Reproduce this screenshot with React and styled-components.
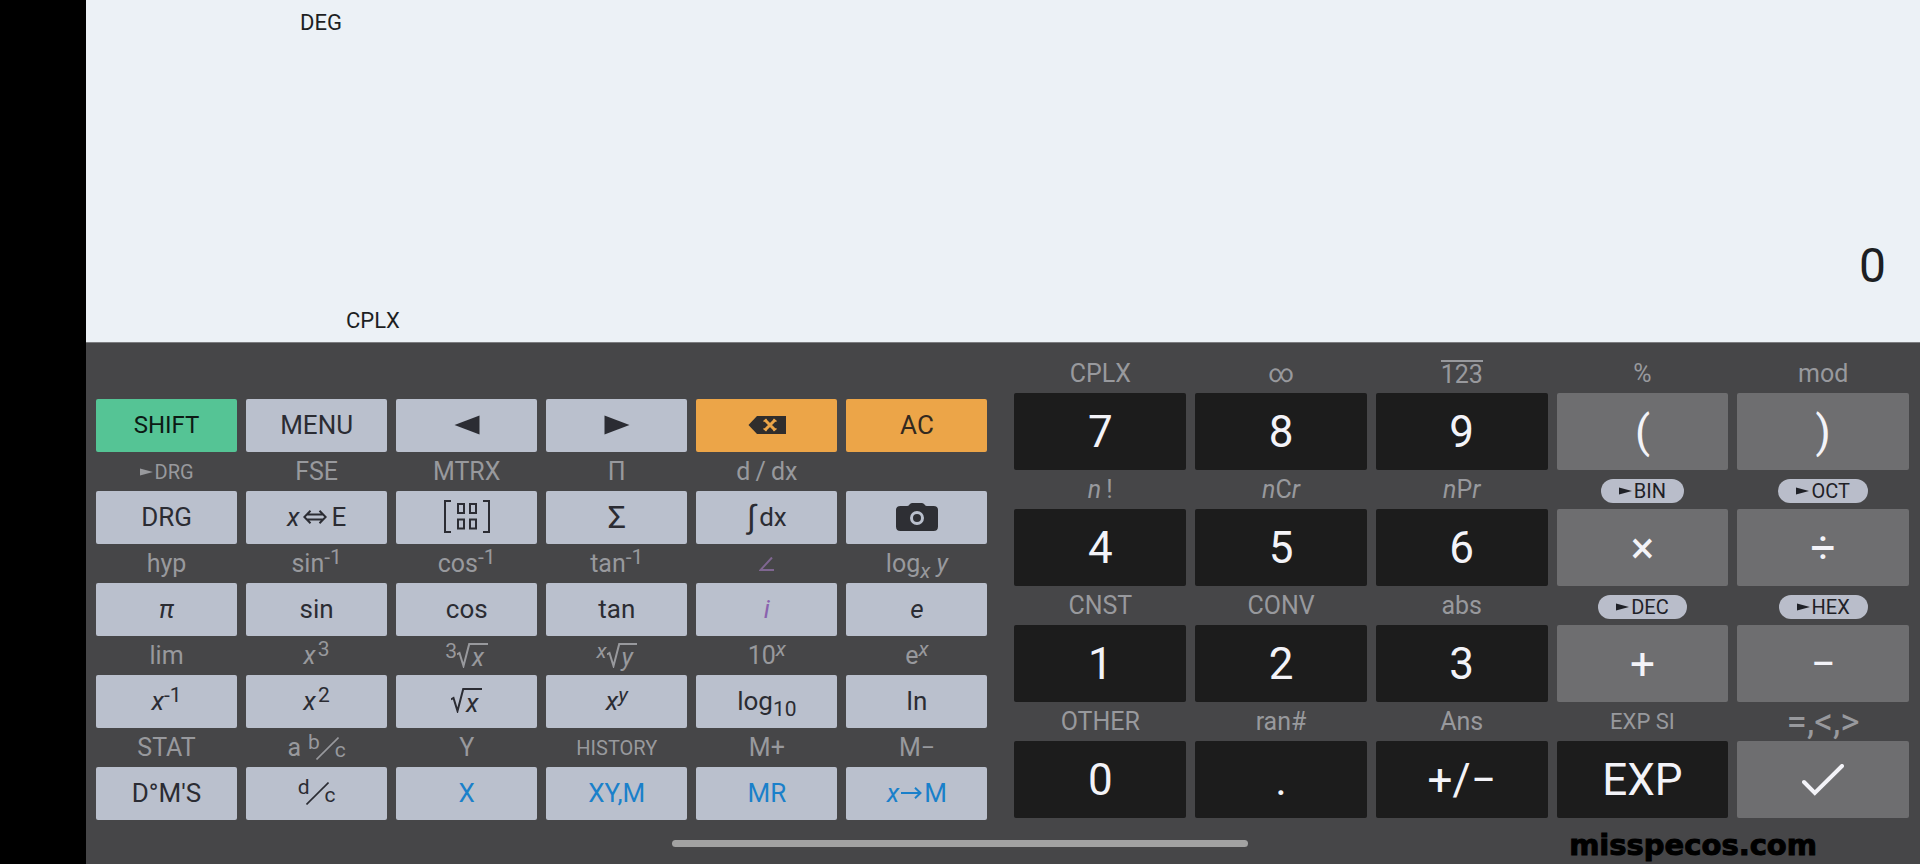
import React from 'react';
import styled, { createGlobalStyle } from 'styled-components';

const GlobalStyle = createGlobalStyle`
  :root {
    --display: #ecf1f6;
    --panel: #464648;
    --ink: #2b2c33;
    --label: #98999d;
    --blue: #1a80ca;
    --purple: #8a62ae;
    --violet: #7f6691;
  }

  *,
  *::before,
  *::after {
    box-sizing: border-box;
  }

  body {
    margin: 0;
    background: #000;
    font-family: Roboto, "Liberation Sans", sans-serif;
  }
`;

const PageStyles = styled.div`
  position: relative;
  display: flex;
  flex-direction: column;
  min-height: 100vh;
  padding-left: 86px;
`;

const DisplayStyles = styled.section`
  flex: 1;
  display: flex;
  flex-direction: column;
  padding: 10px 34px 8px 214px;
  background: var(--display);
  color: #1d1f23;
  font-size: 22px;
  line-height: 26px;

  output {
    margin: auto 0 14px;
    font-size: 48px;
    line-height: 56px;
    text-align: right;
  }

  .mode {
    padding-left: 46px;
  }
`;

const KeyboardStyles = styled.main`
  display: grid;
  grid-template-columns: 297fr 298fr;
  gap: 27px;
  align-items: start;
  padding: 11px 11px 44px 10px;
  border-top: 1px solid #7b7c7f;
  background: var(--panel);
`;

const KeyGrid = styled.div`
  display: grid;
  grid-template-columns: repeat(${({ $columns }) => $columns}, 1fr);
  column-gap: 9px;
  padding-top: ${({ $offset }) => $offset || 0}px;
`;

const KeyStyles = styled.div`
  display: flex;
  flex-direction: column;
  min-width: 0;
`;

const Label = styled.span`
  display: flex;
  align-items: center;
  justify-content: center;
  height: 39px;
  color: ${({ $color }) => $color || 'var(--label)'};
  font-size: ${({ $size }) => $size || 25}px;
  white-space: pre;
`;

const tones = {
  light: { background: '#bac0cd', color: 'var(--ink)' },
  memory: { background: '#bac0cd', color: 'var(--blue)' },
  complex: { background: '#bac0cd', color: 'var(--purple)' },
  shift: { background: '#55c495', color: '#0c1a14' },
  orange: { background: '#eca548', color: '#33291f' },
  dark: { background: '#1c1c1c', color: '#f3f3f8' },
  grey: { background: '#6e6e70', color: '#f3f3f8' },
};

const Button = styled.button`
  display: flex;
  align-items: center;
  justify-content: center;
  height: ${({ $large }) => ($large ? 77 : 53)}px;
  padding: ${({ $large }) => ($large ? 0 : '0 0 2px')};
  border: 0;
  border-radius: 2px;
  background: ${({ $tone }) => tones[$tone].background};
  color: ${({ $tone }) => tones[$tone].color};
  font-family: inherit;
  font-size: ${({ $large, $size }) => $size || ($large ? 44 : 26)}px;
  white-space: pre;
  cursor: pointer;
`;

const Pill = styled.span`
  display: flex;
  align-items: center;
  gap: 2px;
  height: 24px;
  margin-top: 3px;
  padding: 0 18px;
  border-radius: 12px;
  background: #b9bdca;
  color: #1f2127;
  font-size: 20px;
`;

const Sup = styled.span`
  font-size: 21px;
  line-height: 0;
  vertical-align: 8px;
`;

const Sub = styled.span`
  font-size: 21px;
  line-height: 0;
  vertical-align: -6px;
`;

const Inline = styled.span`
  display: flex;
  align-items: center;
  gap: ${({ $gap }) => $gap || 0}px;
`;

const Integral = styled.span`
  font-size: 32px;
  line-height: 36px;
`;

const RootStyles = styled.span`
  display: flex;
  align-items: flex-start;

  .index {
    font-size: 21px;
    line-height: 17px;
  }

  .radicand {
    height: 25px;
    padding: 0 4px 0 2px;
    border-top: 2px solid currentColor;
    line-height: 26px;
  }
`;

const FractionStyles = styled.span`
  display: flex;
  align-items: center;
  font-size: 21px;
  line-height: 22px;

  .top {
    padding-bottom: 12px;
  }

  .bottom {
    padding-top: 4px;
  }

  svg {
    margin: 2px -4px 0;
  }
`;

const Overline = styled.span`
  border-top: 2px solid currentColor;
  line-height: 25px;
`;

const HomeIndicator = styled.div`
  position: absolute;
  bottom: 17px;
  left: 35%;
  width: 30%;
  height: 7px;
  border-radius: 4px;
  background: #a2a2a2;
`;

const Watermark = styled.div`
  position: absolute;
  right: 103px;
  bottom: 3px;
  color: #000;
  font: 700 29px/32px "DejaVu Sans", sans-serif;
  -webkit-text-stroke: 1px #000;
`;

const Pointer = () => (
  <svg width="13" height="8" viewBox="0 0 13 8" fill="currentColor" aria-hidden="true">
    <path d="M0 0.5 13 4 0 7.5z" />
  </svg>
);

const Triangle = ({ left }) => (
  <svg width="26" height="20" viewBox="0 0 26 20" fill="currentColor" aria-hidden="true">
    <path d={left ? 'M25.5 0.5v19L0.5 10z' : 'M0.5 0.5v19L25.5 10z'} />
  </svg>
);

const Backspace = () => (
  <svg width="38" height="18" viewBox="0 0 38 18" aria-hidden="true">
    <path d="M0.5 9 9 0h29v18H9z" fill="#302d2c" />
    <path d="m17 4 10 10M27 4 17 14" stroke="#eca548" strokeWidth="3" />
    <path d="M15.5 5.5l3-2.5M25.5 3l3 2.5M15.5 12.5l3 2.5M25.5 15l3-2.5" stroke="#eca548" strokeWidth="1.5" />
  </svg>
);

const Camera = () => (
  <svg width="42" height="28" viewBox="0 0 42 28" aria-hidden="true">
    <path
      d="M4.5 3H11q1.5 0 2.5-1.5T16 0h10q1.5 0 2.5 1.5T31 3h6.5Q42 3 42 7v16.5q0 4.5-4.5 4.5h-33Q0 28 0 23.5V7q0-4 4.5-4z"
      fill="#2e2f34"
    />
    <circle cx="21" cy="15" r="5.5" fill="none" stroke="#bac0cd" strokeWidth="3" />
  </svg>
);

const Matrix = () => (
  <svg width="46" height="33" viewBox="0 0 46 33" fill="none" stroke="currentColor" strokeWidth="2" aria-hidden="true">
    <path d="M7 1H1v31h6M39 1h6v31h-6" />
    <path d="M14 4h6v9h-6zM26 4h6v9h-6zM14 19.5h6v9h-6zM26 19.5h6v9h-6z" />
  </svg>
);

const Exchange = () => (
  <svg width="24" height="14" viewBox="0 0 24 14" fill="none" stroke="currentColor" strokeWidth="2" aria-hidden="true">
    <path d="M4 4.5h16M4 9.5h16M7.5 0.7 1.3 7l6.2 6.3M16.5 0.7 22.7 7l-6.2 6.3" />
  </svg>
);

const Arrow = () => (
  <svg width="21" height="12" viewBox="0 0 21 12" fill="none" stroke="currentColor" strokeWidth="2" aria-hidden="true">
    <path d="M0 6h19M14 0.8 19.5 6 14 11.2" />
  </svg>
);

const Angle = () => (
  <svg width="15" height="14" viewBox="0 0 15 14" fill="none" stroke="currentColor" strokeWidth="2" aria-hidden="true">
    <path d="M13 0.5 1.5 13H15" />
  </svg>
);

const Check = () => (
  <svg width="42" height="32" viewBox="0 0 42 32" fill="none" stroke="currentColor" strokeWidth="4" aria-hidden="true">
    <path d="m2 18 10.8 11L40 2" strokeLinecap="round" />
  </svg>
);

const Root = ({ index, children }) => (
  <RootStyles>
    {index && <span className="index">{index}</span>}
    <svg width="13" height="25" viewBox="0 0 13 25" fill="none" stroke="currentColor" strokeWidth="2" aria-hidden="true">
      <path d="M0 11.5 2.5 10 6.5 23 12.2 1H13" />
    </svg>
    <i className="radicand">{children}</i>
  </RootStyles>
);

const Fraction = ({ top, bottom }) => (
  <FractionStyles>
    <span className="top">{top}</span>
    <svg width="23" height="23" viewBox="0 0 23 23" fill="none" stroke="currentColor" strokeWidth="1.6" aria-hidden="true">
      <path d="M0.5 22.5 22.5 0.5" />
    </svg>
    <span className="bottom">{bottom}</span>
  </FractionStyles>
);

const functionKeys = [
  { key: 'SHIFT', tone: 'shift', size: 24 },
  { key: 'MENU' },
  { key: <Triangle left />, name: 'Cursor left' },
  { key: <Triangle />, name: 'Cursor right' },
  { key: <Backspace />, name: 'Backspace', tone: 'orange' },
  { key: 'AC', tone: 'orange' },

  { label: <Inline $gap={2}><Pointer />DRG</Inline>, labelSize: 20, key: 'DRG' },
  { label: 'FSE', key: <Inline $gap={4}><i>x</i><Exchange />E</Inline> },
  { label: 'MTRX', key: <Matrix />, name: 'Matrix' },
  { label: 'Π', key: 'Σ', size: 32 },
  { label: 'd\u2009/\u2009dx', key: <Inline $gap={4}><Integral>∫</Integral>dx</Inline> },
  { label: '', key: <Camera />, name: 'Camera' },

  { label: 'hyp', key: <i>π</i> },
  { label: <span>sin<Sup>-1</Sup></span>, key: 'sin' },
  { label: <span>cos<Sup>-1</Sup></span>, key: 'cos' },
  { label: <span>tan<Sup>-1</Sup></span>, key: 'tan' },
  { label: <Angle />, labelColor: 'var(--violet)', key: <i>i</i>, tone: 'complex' },
  { label: <span>log<Sub><i>x</i></Sub> <i>y</i></span>, key: <i>e</i> },

  { label: 'lim', key: <span><i>x</i><Sup>-1</Sup></span> },
  { label: <span><i>x</i><Sup>{'\u200a'}3</Sup></span>, key: <span><i>x</i><Sup>{'\u200a'}2</Sup></span> },
  { label: <Root index="3">x</Root>, key: <Root>x</Root> },
  { label: <Root index={<i>x</i>}>y</Root>, key: <span><i>x</i><Sup><i>y</i></Sup></span> },
  { label: <span>10<Sup><i>x</i></Sup></span>, key: <span>log<Sub>10</Sub></span> },
  { label: <span>e<Sup><i>x</i></Sup></span>, key: 'ln' },

  { label: 'STAT', key: 'D°M\'S' },
  { label: <Inline $gap={7}>a<Fraction top="b" bottom="c" /></Inline>, key: <Fraction top="d" bottom="c" /> },
  { label: 'Y', key: 'X', tone: 'memory' },
  { label: 'HISTORY', labelSize: 20, key: 'XY,M', tone: 'memory' },
  { label: 'M+', key: 'MR', tone: 'memory' },
  { label: 'M−', key: <Inline $gap={2}><i>x</i><Arrow />M</Inline>, tone: 'memory' },
];

const numberKeys = [
  { label: 'CPLX', key: '7', tone: 'dark' },
  { label: '∞', key: '8', tone: 'dark' },
  { label: <Overline>123</Overline>, key: '9', tone: 'dark' },
  { label: '%', key: '(', tone: 'grey' },
  { label: 'mod', key: ')', tone: 'grey' },

  { label: <span><i>n</i>{'\u2009'}!</span>, key: '4', tone: 'dark' },
  { label: <span><i>n</i>C<i>r</i></span>, key: '5', tone: 'dark' },
  { label: <span><i>n</i>P<i>r</i></span>, key: '6', tone: 'dark' },
  { label: <Pill><Pointer />BIN</Pill>, key: '×', tone: 'grey' },
  { label: <Pill><Pointer />OCT</Pill>, key: '÷', tone: 'grey' },

  { label: 'CNST', key: '1', tone: 'dark' },
  { label: 'CONV', key: '2', tone: 'dark' },
  { label: 'abs', key: '3', tone: 'dark' },
  { label: <Pill><Pointer />DEC</Pill>, key: '+', tone: 'grey' },
  { label: <Pill><Pointer />HEX</Pill>, key: '−', tone: 'grey' },

  { label: 'OTHER', key: '0', tone: 'dark' },
  { label: 'ran#', key: '.', tone: 'dark' },
  { label: 'Ans', key: '+/−', tone: 'dark' },
  { label: 'EXP SI', labelSize: 22, key: 'EXP', tone: 'dark' },
  { label: '=,<,>', labelSize: 37, key: <Check />, name: 'Enter', tone: 'grey' },
];

const Key = ({ item, large }) => (
  <KeyStyles>
    {item.label !== undefined && (
      <Label $size={item.labelSize} $color={item.labelColor}>{item.label}</Label>
    )}
    <Button type="button" $tone={item.tone || 'light'} $size={item.size} $large={large} aria-label={item.name}>
      {item.key}
    </Button>
  </KeyStyles>
);

const App = () => (
  <>
    <GlobalStyle />
    <PageStyles>
      <DisplayStyles>
        <span>DEG</span>
        <output>0</output>
        <span className="mode">CPLX</span>
      </DisplayStyles>
      <KeyboardStyles>
        <KeyGrid $columns={6} $offset={45}>
          {functionKeys.map((item, i) => <Key key={i} item={item} />)}
        </KeyGrid>
        <KeyGrid $columns={5}>
          {numberKeys.map((item, i) => <Key key={i} item={item} large />)}
        </KeyGrid>
      </KeyboardStyles>
      <HomeIndicator />
      <Watermark>misspecos.com</Watermark>
    </PageStyles>
  </>
);

export default App;
